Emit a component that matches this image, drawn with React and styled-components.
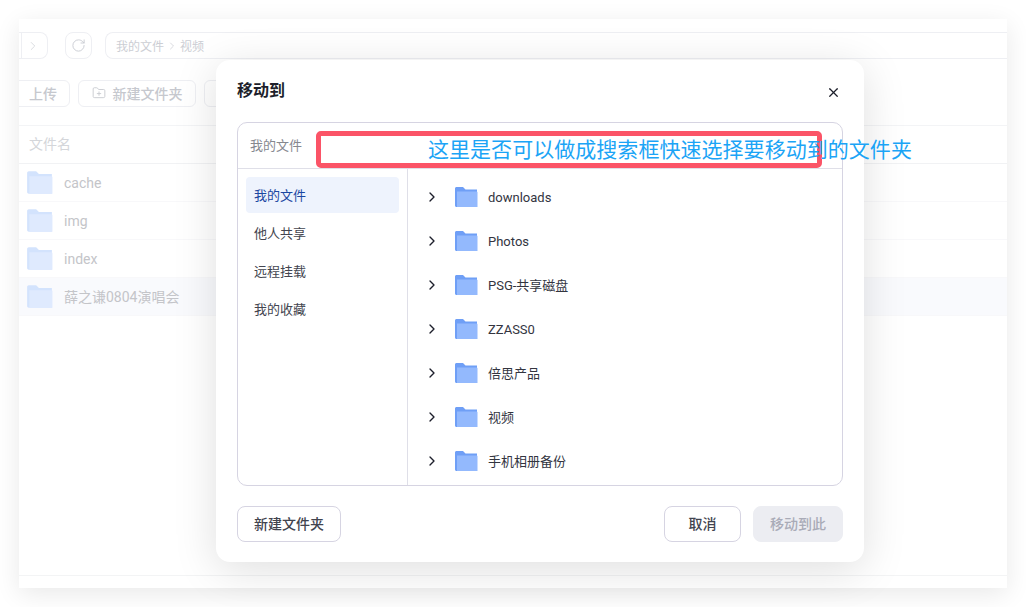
import React from 'react'
import styled, { createGlobalStyle } from 'styled-components'
import { ChevronRight, FolderPlus, RotateCw, Upload, X } from 'lucide-react'

const GlobalStyle = createGlobalStyle`
    html, body {
        margin: 0;
        background: #fff;
    }
    body {
        font-family: Roboto, "Noto Sans CJK SC", sans-serif;
    }
    * {
        box-sizing: border-box;
    }
`

const Page = styled.div`
    width: 1026px;
    height: 607px;
    padding: 19px;
    overflow: hidden;
`

const Window = styled.div`
    position: relative;
    width: 988px;
    height: 569px;
    background: #fff;
    box-shadow: 0 6px 24px rgba(0,0,0,.09);
    display: flex;
    flex-direction: column;
`

const Clip = styled.div`
    flex: 1;
    overflow: hidden;
    display: flex;
    flex-direction: column;
`

const NavBar = styled.div`
    display: flex;
    align-items: center;
    height: 27px;
    margin-top: 13px;
    gap: 13px;
`

const NavGroup = styled.div`
    display: flex;
    width: 29px;
    height: 27px;
    border: 1px solid #eeeff3;
    border-left: none;
    border-radius: 0 8px 8px 0;
    color: #d5d7dc;
    align-items: center;
    justify-content: flex-end;
    padding-right: 7px;
    position: relative;
    &:before {
        content: "";
        position: absolute;
        left: 2px;
        top: 0;
        bottom: 0;
        width: 1px;
        background: #eeeff3;
    }
`

const RefreshButton = styled.div`
    width: 27px;
    height: 27px;
    margin-left: 4px;
    border: 1px solid #eeeff3;
    border-radius: 8px;
    display: flex;
    align-items: center;
    justify-content: center;
    color: #c9ccd2;
`

const Breadcrumb = styled.div`
    flex: 1;
    height: 27px;
    display: flex;
    align-items: center;
    gap: 2px;
    padding-left: 10px;
    border: 1px solid #eeeff3;
    border-right: none;
    border-radius: 8px 0 0 8px;
    font-size: 12px;
    color: #ccced4;
`

const Toolbar = styled.div`
    display: flex;
    height: 27px;
    margin-top: 21px;
    margin-left: -30px;
    gap: 8px;
`

const ToolButton = styled.div`
    height: 27px;
    width: ${p => p.$width}px;
    border: 1px solid #eeeff3;
    border-radius: 6px;
    padding-bottom: 2px;
    display: flex;
    align-items: center;
    justify-content: center;
    gap: 7px;
    font-size: 14px;
    font-weight: 500;
    color: #c6c8ce;
`

const UploadButton = styled(ToolButton)`
    justify-content: flex-end;
    padding-right: 12px;
    gap: 9px;
`

const TableHead = styled.div`
    height: 39px;
    margin-top: 18px;
    border-top: 1px solid #f3f4f6;
    border-bottom: 1px solid #f1f2f4;
    padding: 0 0 4px 10px;
    display: flex;
    align-items: center;
    font-size: 14px;
    color: #d4d6da;
`

const FileRow = styled.div`
    height: 38px;
    padding-left: 7px;
    display: flex;
    align-items: center;
    gap: 11px;
    font-size: 14px;
    color: #c4c5c9;
    background: ${p => (p.$hover ? '#f9fafd' : '#fff')};
    border-bottom: 1px solid #f8f8fa;
`

const Name = styled.span`
    padding-bottom: ${p => (p.$cjk ? '2px' : '0')};
`

const Footer = styled.div`
    height: 13px;
    border-top: 1px solid #f3f4f5;
    margin-top: auto;
`

const Modal = styled.div`
    position: absolute;
    left: 197px;
    top: 41px;
    width: 648px;
    height: 502px;
    padding: 0 21px;
    background: #fff;
    border-radius: 14px;
    box-shadow: 0 8px 44px rgba(0,0,0,.13);
    display: flex;
    flex-direction: column;
`

const ModalHeader = styled.div`
    height: 62px;
    display: flex;
    align-items: center;
    justify-content: space-between;
    padding-right: 2px;
`

const Title = styled.div`
    font-size: 16px;
    font-weight: 700;
    color: #1d1f2b;
    padding-bottom: 4px;
`

const Picker = styled.div`
    height: 364px;
    border: 1px solid #d6d4e2;
    border-radius: 10px;
    display: flex;
    flex-direction: column;
`

const PickerPath = styled.div`
    height: 46px;
    padding: 0 0 2px 12px;
    border-bottom: 1px solid #dfdfe8;
    display: flex;
    align-items: center;
    font-size: 13px;
    color: #86888f;
`

const PickerBody = styled.div`
    flex: 1;
    display: flex;
    min-height: 0;
`

const Sidebar = styled.div`
    width: 170px;
    padding: 8px;
    border-right: 1px solid #dfdfe8;
    display: flex;
    flex-direction: column;
    gap: 2px;
`

const SideItem = styled.div`
    height: 36px;
    padding: 0 0 2px 8px;
    border-radius: 4px;
    display: flex;
    align-items: center;
    font-size: 13px;
    color: ${p => (p.$active ? '#1b47a1' : '#43454f')};
    background: ${p => (p.$active ? '#eef3fd' : 'transparent')};
`

const Tree = styled.div`
    flex: 1;
    padding-top: 6px;
    display: flex;
    flex-direction: column;
`

const TreeRow = styled.div`
    height: 44px;
    padding-left: 16px;
    display: flex;
    align-items: center;
    gap: 10px;
    font-size: 13px;
    color: #33353f;
`

const Chevron = styled(ChevronRight)`
    color: #1d1f2b;
    margin-right: 4px;
`

const ModalFooter = styled.div`
    flex: 1;
    display: flex;
    align-items: flex-start;
    padding-top: 20px;
    gap: 12px;
`

const Button = styled.div`
    width: ${p => p.$width}px;
    height: 36px;
    padding-bottom: 2px;
    border: 1px solid ${p => (p.$disabled ? '#ecedf2' : '#d6d4e2')};
    border-radius: 8px;
    background: ${p => (p.$disabled ? '#ecedf2' : '#fff')};
    color: ${p => (p.$disabled ? '#a9abb7' : '#42444f')};
    font-size: 14px;
    font-weight: 500;
    display: flex;
    align-items: center;
    justify-content: center;
`

const Spacer = styled.div`
    flex: 1;
`

const CloseButton = styled(X)`
    color: #1d1f2b;
    margin-top: 2px;
`

// red box and note drawn on top of the screenshot
const NoteBox = styled.div`
    position: absolute;
    left: 297px;
    top: 112px;
    width: 506px;
    height: 37px;
    border: 5px solid #fb5467;
    border-radius: 5px;
`

const NoteText = styled.div`
    position: absolute;
    left: 409px;
    top: 116px;
    font-size: 21px;
    letter-spacing: .04px;
    line-height: 30px;
    white-space: nowrap;
    color: #1ba4f6;
`

function Folder({ faded, size = 24 }) {
    const back = faded ? '#d3e3fd' : '#6f9ff6'
    const front = faded ? '#dfeafe' : '#93b9fd'
    return (
        <svg width={size} height={size} viewBox="0 0 24 24" style={{ flexShrink: 0 }}>
            <path d="M1 3.500C1 2.700 1.700 2 2.500 2H9l2.500 2.500H23V22H2.500C1.700 22 1 21.300 1 20.500Z" fill={back} />
            <path d="M3 6.500H22.500C23 6.500 23.500 7 23.500 7.500V22H3Z" fill={front} />
        </svg>
    )
}

const hasCjk = name => /[^\x00-\x7f]/.test(name)

const files = ['cache', 'img', 'index', '薛之谦0804演唱会']
const places = ['我的文件', '他人共享', '远程挂载', '我的收藏']
const folders = ['downloads', 'Photos', 'PSG-共享磁盘', 'ZZASS0', '倍思产品', '视频', '手机相册备份']

export default function App() {
    return (
        <Page>
            <GlobalStyle />
            <Window>
                <Clip>
                    <NavBar>
                        <NavGroup>
                            <ChevronRight size={14} strokeWidth={1.5} />
                        </NavGroup>
                        <RefreshButton>
                            <RotateCw size={15} strokeWidth={1.5} />
                        </RefreshButton>
                        <Breadcrumb>
                            我的文件
                            <ChevronRight size={12} strokeWidth={1.5} />
                            视频
                        </Breadcrumb>
                    </NavBar>
                    <Toolbar>
                        <UploadButton $width={81}>
                            <Upload size={14} />
                            上传
                        </UploadButton>
                        <ToolButton $width={118}>
                            <FolderPlus size={14} strokeWidth={1.5} />
                            新建文件夹
                        </ToolButton>
                        <ToolButton $width={118} />
                    </Toolbar>
                    <TableHead>文件名</TableHead>
                    {files.map((name, i) => (
                        <FileRow key={name} $hover={i === 3}>
                            <Folder faded size={27} />
                            <Name $cjk={hasCjk(name)}>{name}</Name>
                        </FileRow>
                    ))}
                    <Footer />
                </Clip>
                <Modal>
                    <ModalHeader>
                        <Title>移动到</Title>
                        <CloseButton size={15} strokeWidth={2} />
                    </ModalHeader>
                    <Picker>
                        <PickerPath>我的文件</PickerPath>
                        <PickerBody>
                            <Sidebar>
                                {places.map((name, i) => (
                                    <SideItem key={name} $active={i === 0}>{name}</SideItem>
                                ))}
                            </Sidebar>
                            <Tree>
                                {folders.map(name => (
                                    <TreeRow key={name}>
                                        <Chevron size={16} strokeWidth={2} />
                                        <Folder />
                                        <Name $cjk={hasCjk(name)}>{name}</Name>
                                    </TreeRow>
                                ))}
                            </Tree>
                        </PickerBody>
                    </Picker>
                    <ModalFooter>
                        <Button $width={104}>新建文件夹</Button>
                        <Spacer />
                        <Button $width={77}>取消</Button>
                        <Button $width={90} $disabled>移动到此</Button>
                    </ModalFooter>
                </Modal>
                <NoteBox />
                <NoteText>这里是否可以做成搜索框快速选择要移动到的文件夹</NoteText>
            </Window>
        </Page>
    )
}
